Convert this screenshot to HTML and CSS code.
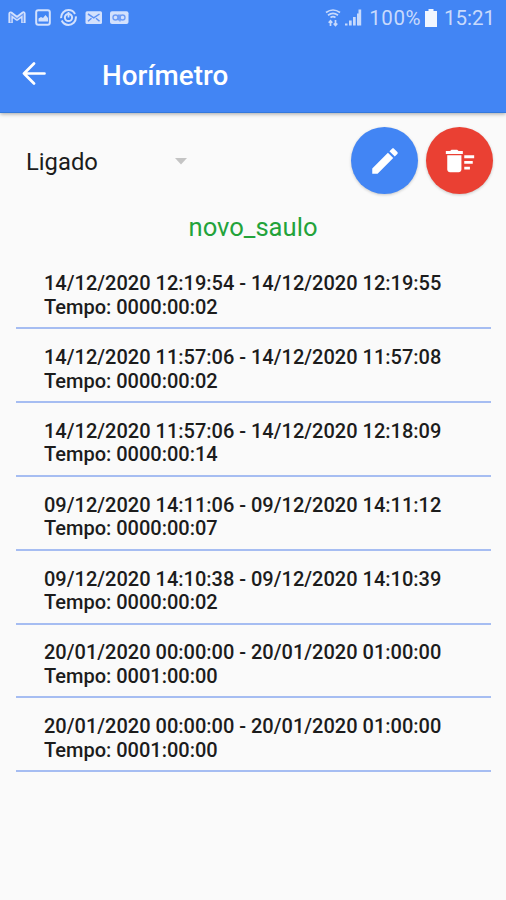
FILE: index.html
```html
<!DOCTYPE html>
<html lang="pt-BR">
<head>
    <meta charset="UTF-8">
    <meta name="viewport" content="width=device-width, initial-scale=1.0">
    <title>Horímetro</title>
    <link rel="stylesheet" href="styles.css">
</head>
<body>
    <header class="top">
        <div class="status-bar">
            <svg class="notifications" width="122" height="20" viewBox="0 0 122 20">
                <!-- mail -->
                <path d="M2.6 15V5.6l6.4 5 6.4-5V15" fill="none" stroke="#d3e1fd" stroke-width="4.4" stroke-linejoin="round"/>
                <path d="M2.8 14.5V6l6.2 4.8L15.2 6v8.5" fill="none" stroke="#6e9df6" stroke-width="1.3"/>
                <!-- gallery -->
                <rect x="28.2" y="2.2" width="13.6" height="14.6" rx="2" fill="none" stroke="#d3e1fd" stroke-width="2"/>
                <path d="M30.5 13.5v-3l2.5-1.5 2 1 2.5-3 2.5 3v3.5z" fill="#d3e1fd"/>
                <!-- sync ring -->
                <circle cx="60.5" cy="9.5" r="7.4" fill="none" stroke="#d3e1fd" stroke-width="2" stroke-dasharray="20 2.5"/>
                <circle cx="60.5" cy="9.5" r="3.6" fill="none" stroke="#d3e1fd" stroke-width="2"/>
                <path d="M60.5 9.5V4" stroke="#d3e1fd" stroke-width="1.8"/>
                <!-- envelope -->
                <rect x="77.5" y="3.2" width="16.5" height="12.8" rx="1.5" fill="#d3e1fd"/>
                <path d="M80 6l5.8 3.8L91.5 6M80 13.2l3.5-3M91.5 13.2l-3.5-3" fill="none" stroke="#5c91f5" stroke-width="1.5"/>
                <!-- voicemail -->
                <rect x="102" y="3.2" width="18.5" height="12.8" rx="2" fill="#d3e1fd"/>
                <g fill="none" stroke="#6e9df6" stroke-width="1.4">
                    <circle cx="107.5" cy="9.5" r="2.5"/>
                    <circle cx="114.5" cy="9.5" r="2.5"/>
                    <path d="M110.5 6.5v6M112 6.5v7"/>
                </g>
            </svg>
            <div class="system">
                <svg width="39" height="20" viewBox="0 0 39 20">
                    <g fill="none" stroke="#c8dafc" stroke-width="1.7">
                        <path d="M1 4.5q7-5 14 0M3 7.2q5-3.6 10 0M5.5 9.5q2.5-1.7 5 0"/>
                        <path d="M5.5 18v-5M3.7 14.8l1.8-2 1.8 2M10.5 12v5M8.7 15.5l1.8 2 1.8-2"/>
                    </g>
                    <path d="M20 15.5h2.5v2H20zM24 12.5h2.7v5H24zM28 9h2.7v8.5H28zM32 5.5h2v12h-2z" fill="#c8dafc"/>
                    <path d="M33.5 1.5h2.7v16h-2.7z" fill="#c8dafc"/>
                </svg>
                <span class="battery-level">100%</span>
                <svg class="battery" width="12" height="18" viewBox="0 0 12 18">
                    <path d="M3.5 0h5v2H12v16H0V2h3.5z" fill="#f1f6ff"/>
                </svg>
                <span class="clock">15:21</span>
            </div>
        </div>
        <div class="toolbar">
            <svg class="back" width="24" height="24" viewBox="0 0 24 24">
                <path d="M22.5 11.5H2M12 1.5l-10 10 10 10" fill="none" stroke="#fff" stroke-width="2.7" stroke-linecap="round" stroke-linejoin="round"/>
            </svg>
            <h1>Horímetro</h1>
        </div>
    </header>

    <main>
        <div class="controls">
            <div class="select">
                <span>Ligado</span>
                <svg width="12" height="7" viewBox="0 0 12 7"><path d="M0 0h12L6 6.5z" fill="#c4c4c4"/></svg>
            </div>
            <button class="fab edit" aria-label="Editar">
                <svg width="34" height="34" viewBox="0 0 24 24">
                    <path d="M3 17.25V21h3.75L17.81 9.94l-3.75-3.75L3 17.25zM20.71 7.04c.39-.39.39-1.02 0-1.41l-2.34-2.34c-.39-.39-1.02-.39-1.41 0l-1.83 1.83 3.75 3.75 1.83-1.83z" fill="#fff"/>
                </svg>
            </button>
            <button class="fab delete" aria-label="Apagar">
                <svg width="34" height="34" viewBox="0 0 24 24">
                    <path d="M15 16h4v2h-4zm0-8h7v2h-7zm0 4h6v2h-6zM3 18c0 1.1.9 2 2 2h6c1.1 0 2-.9 2-2V8H3v10zM14 5h-3l-1-1H6L5 5H2v2h12z" fill="#fff"/>
                </svg>
            </button>
        </div>

        <h2>novo_saulo</h2>

        <ul class="records">
            <li>14/12/2020 12:19:54 - 14/12/2020 12:19:55<br>Tempo: 0000:00:02</li>
            <li>14/12/2020 11:57:06 - 14/12/2020 11:57:08<br>Tempo: 0000:00:02</li>
            <li>14/12/2020 11:57:06 - 14/12/2020 12:18:09<br>Tempo: 0000:00:14</li>
            <li>09/12/2020 14:11:06 - 09/12/2020 14:11:12<br>Tempo: 0000:00:07</li>
            <li>09/12/2020 14:10:38 - 09/12/2020 14:10:39<br>Tempo: 0000:00:02</li>
            <li>20/01/2020 00:00:00 - 20/01/2020 01:00:00<br>Tempo: 0001:00:00</li>
            <li>20/01/2020 00:00:00 - 20/01/2020 01:00:00<br>Tempo: 0001:00:00</li>
        </ul>
    </main>
</body>
</html>
```
FILE: styles.css
```css
* {
    box-sizing: border-box;
}

body {
    margin: 0;
    min-height: 900px;
    font-family: Roboto, "Liberation Sans", sans-serif;
    background-color: #fafafa;
    color: #1c1c1c;
}

h1, h2, ul {
    margin: 0;
    padding: 0;
}

.top {
    height: 113px;
    background-color: #4285f4;
    border-bottom: 1px solid #3479dc;
    box-shadow: 0 1px 4px rgba(0, 0, 0, 0.35);
}

.status-bar {
    display: flex;
    justify-content: space-between;
    align-items: center;
    height: 36px;
    padding: 0 11px 0 8px;
}

.system {
    display: flex;
    align-items: center;
    color: #c8dafc;
    font-size: 20.5px;
}

.battery-level {
    margin-left: 5px;
    letter-spacing: 0.5px;
}

.battery {
    margin: 0 7px 0 4px;
}

.toolbar {
    display: flex;
    align-items: center;
    height: 76px;
    padding-left: 22px;
}

h1 {
    margin-left: 56px;
    padding-top: 3px;
    color: #fff;
    font-size: 27.8px;
    font-weight: 500;
}

.controls {
    display: flex;
    align-items: center;
    gap: 8px;
    padding: 14px 13px 0 26px;
}

.select {
    display: flex;
    align-items: center;
    justify-content: space-between;
    width: 161px;
    margin-right: auto;
    padding-top: 2px;
    font-size: 23.8px;
}

.fab {
    display: flex;
    align-items: center;
    justify-content: center;
    width: 67px;
    height: 67px;
    padding: 0;
    border: 0;
    border-radius: 50%;
    box-shadow: 0 1px 3px rgba(0, 0, 0, 0.2);
}

.edit {
    background-color: #4285f4;
}

.delete {
    background-color: #ea4033;
}

h2 {
    margin-top: 18px;
    color: #23a33a;
    font-size: 25.6px;
    font-weight: 400;
    line-height: 30px;
    text-align: center;
}

.records {
    margin: 13.5px 15px 0 16px;
    list-style: none;
}

.records li {
    height: 73.83px;
    padding: 16.7px 0 0 28px;
    border-bottom: 2px solid #a6bdf2;
    font-size: 20px;
    font-weight: 500;
    line-height: 23.5px;
}
```
